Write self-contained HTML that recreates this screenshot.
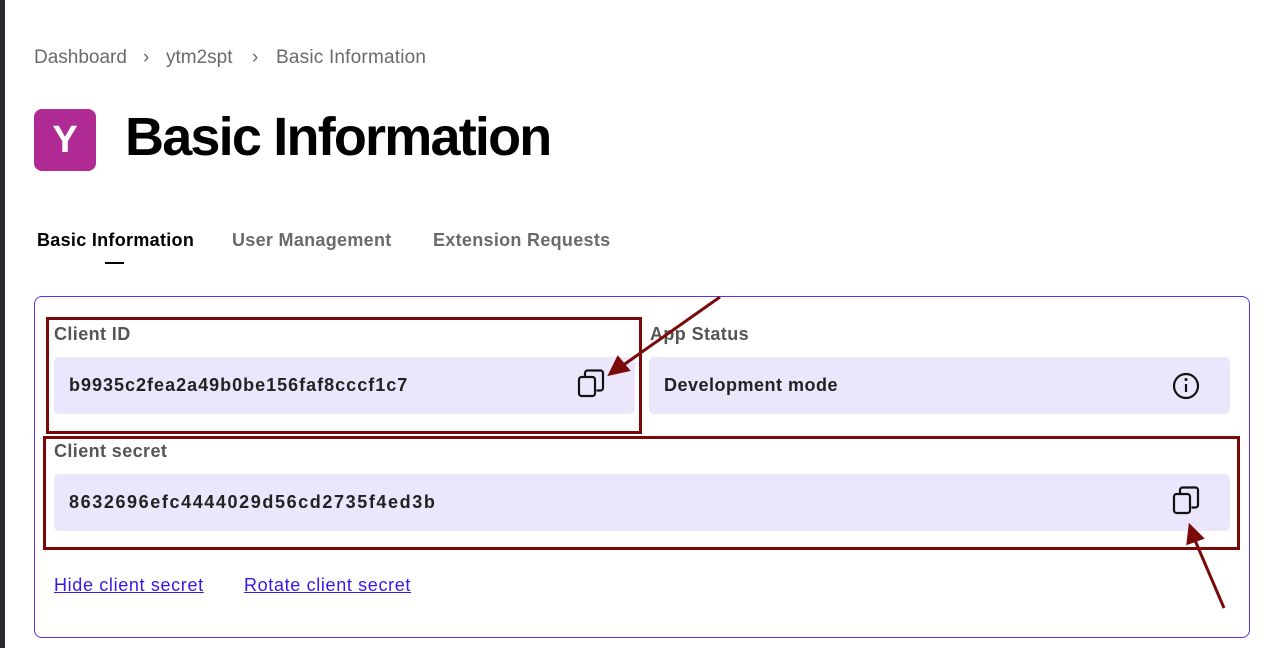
<!DOCTYPE html>
<html><head><style>
*{margin:0;padding:0;box-sizing:border-box}
body{width:1274px;height:648px;background:#fff;font-family:"Liberation Sans",sans-serif;position:relative;overflow:hidden;color:#000}
.bar{position:absolute;left:0;top:0;width:5px;height:648px;background:#2a2a2e}
.a{position:absolute;white-space:nowrap}
.crumb{top:47px;font-size:19px;color:#6a6a6a}
.logo{left:34px;top:109px;width:62px;height:62px;background:#b02a94;border-radius:8px;color:#fff;font-weight:bold;font-size:38px;text-align:center;line-height:62px}
h1{position:absolute;left:125px;top:106px;font-size:54px;font-weight:bold;letter-spacing:-1.8px}
.tab{top:230px;font-size:18px;font-weight:bold;color:#6a6a6a;letter-spacing:0.3px}
.card{position:absolute;left:34px;top:296px;width:1216px;height:342px;border:1px solid #5b2ef0;border-radius:8px}
.lbl{font-size:18px;font-weight:bold;color:#555;letter-spacing:0.4px}
.fld{position:absolute;background:#ebe6fc;border-radius:5px;font-size:18px;font-weight:bold;color:#222;padding-left:15px;line-height:57px}
.lnk{top:575px;font-size:18px;color:#3b16e8;text-decoration:underline;letter-spacing:0.65px}
.red{position:absolute;border:3px solid #7a0a0a}
</style></head><body>
<div class="bar"></div>
<div class="a crumb" style="left:34px">Dashboard</div>
<div class="a crumb" style="left:143px">›</div>
<div class="a crumb" style="left:166px">ytm2spt</div>
<div class="a crumb" style="left:252px">›</div>
<div class="a crumb" style="left:276px;letter-spacing:0.2px">Basic Information</div>
<div class="a logo">Y</div>
<h1>Basic Information</h1>
<div class="a tab" style="left:37px;color:#000">Basic Information</div>
<div class="a" style="left:105px;top:262px;width:19px;height:2px;background:#000"></div>
<div class="a tab" style="left:232px">User Management</div>
<div class="a tab" style="left:433px">Extension Requests</div>
<div class="card"></div>
<div class="a lbl" style="left:54px;top:324px">Client ID</div>
<div class="a lbl" style="left:650px;top:324px">App Status</div>
<div class="fld" style="left:54px;top:357px;width:581px;height:57px;letter-spacing:1px">b9935c2fea2a49b0be156faf8cccf1c7</div>
<div class="fld" style="left:649px;top:357px;width:581px;height:57px;letter-spacing:0.5px">Development mode</div>
<div class="a lbl" style="left:54px;top:441px">Client secret</div>
<div class="fld" style="left:54px;top:474px;width:1176px;height:57px;letter-spacing:1.6px">8632696efc4444029d56cd2735f4ed3b</div>
<div class="a lnk" style="left:54px">Hide client secret</div>
<div class="a lnk" style="left:244px">Rotate client secret</div>
<div class="red" style="left:46px;top:317px;width:596px;height:117px"></div>
<div class="red" style="left:43px;top:436px;width:1197px;height:114px"></div>
<svg class="a" style="left:0;top:0" width="1274" height="648">
<g fill="none" stroke="#111" stroke-width="2.2">
<rect x="579" y="377" width="16" height="19" rx="2.5"/><path d="M585 377v-4a2.5 2.5 0 0 1 2.5-2.5h13a2.5 2.5 0 0 1 2.5 2.5v15a2.5 2.5 0 0 1-2.5 2.5h-4"/>
<rect x="1174" y="494" width="16" height="19" rx="2.5"/><path d="M1180 494v-4a2.5 2.5 0 0 1 2.5-2.5h13a2.5 2.5 0 0 1 2.5 2.5v15a2.5 2.5 0 0 1-2.5 2.5h-4"/>
<circle cx="1186" cy="386" r="12"/><path d="M1186 384v8"/>
</g>
<circle cx="1186" cy="379.5" r="1.5" fill="#111"/>
<g stroke="#7a0a0a" stroke-width="3" fill="#7a0a0a">
<path d="M720 297L622 366"/><path d="M610 374l8-16 10 12z"/>
<path d="M1224 608L1194 538"/><path d="M1190 526l12 12-14 5z"/>
</g>
</svg>
</body></html>
